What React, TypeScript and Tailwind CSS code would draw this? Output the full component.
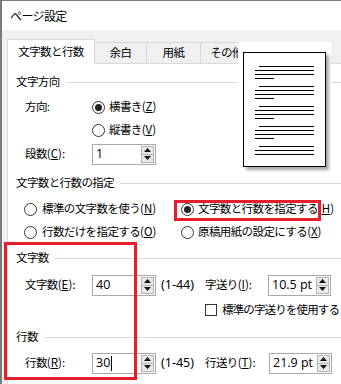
import React from "react";

const jp = "font-['Noto_Sans_CJK_JP',sans-serif]";

const Radio = ({ on }: { on?: boolean }) => (
  <span className="flex h-[13px] w-[13px] shrink-0 items-center justify-center rounded-full border border-[#333333] bg-white">
    {on && <span className="h-[7px] w-[7px] rounded-full bg-[#222222]" />}
  </span>
);

const Arrow = ({ up }: { up?: boolean }) => (
  <svg width="7" height="4" viewBox="0 0 7 4">
    {up ? <polygon points="0,4 7,4 3.5,0" fill="#111" /> : <polygon points="0,0 7,0 3.5,4" fill="#111" />}
  </svg>
);

// access key, e.g. (Z)
const Key = ({ k, colon }: { k: string; colon?: boolean }) => (
  <span className="tracking-normal">
    (<u>{k}</u>){colon && ":"}
  </span>
);

const Spin = ({ value, wide, caret }: { value: string; wide?: boolean; caret?: boolean }) => (
  <div className={`flex h-[21px] items-center border border-[#a8a8a8] bg-white ${wide ? "w-[63px]" : "w-[64px]"}`}>
    <span className="flex flex-1 items-center pl-[3px] font-['Open_Sans',sans-serif] text-[12.5px] leading-none tracking-normal text-black">
      {value}
      {caret && <span className="ml-px inline-block h-[15px] w-px bg-black" />}
    </span>
    <div className="mr-px flex h-[17px] w-[13px] flex-col border border-[#b4b4b4]">
      <div className="flex flex-1 items-center justify-center border-b border-[#b4b4b4] bg-[#e8e8e8]">
        <Arrow up />
      </div>
      <div className="flex flex-1 items-center justify-center bg-[#e8e8e8]">
        <Arrow />
      </div>
    </div>
  </div>
);

const Heading = ({ children, className }: { children: React.ReactNode; className: string }) => (
  <div className={`flex h-[16px] items-center pl-[8px] ${className}`}>
    <span className="leading-none">{children}</span>
    <span className="ml-[6px] h-px flex-1 bg-[#dcdcdc]" />
  </div>
);

const PageLines = ({ last }: { last?: boolean }) => (
  <div className="flex flex-col gap-[3px]">
    <div className="ml-[4px] h-px w-[55px] bg-black" />
    <div className="h-px w-[59px] bg-black" />
    <div className="h-px w-[59px] bg-black" />
    {!last && <div className="h-px w-[19px] bg-black" />}
  </div>
);

const Range = ({ children }: { children: React.ReactNode }) => (
  <span className="ml-[5px] w-[44px] font-['Noto_Sans',sans-serif] text-[12.5px] leading-none tracking-normal">{children}</span>
);

export default function App() {
  return (
    <div className={`relative h-[384px] w-[341px] overflow-hidden bg-[#f0f0f0] text-[11.5px] tracking-[-0.6px] text-black ${jp}`}>
      <div className="flex h-full flex-col border-l-2 border-t border-[#7a7a7a]">
        {/* Title bar */}
        <div className="flex h-[29px] items-center bg-white pl-[8px] text-[12px] leading-none">ページ設定</div>

        {/* Tabs */}
        <div className="relative z-10 mt-[9px] flex h-[25px] items-end pl-[5px]">
          <div className="flex h-[25px] w-[88px] items-center justify-center border-x border-t border-[#d9d9d9] bg-white leading-none">
            文字数と行数
          </div>
          <div className="mb-px flex h-[21px] w-[52px] items-center justify-center border-r border-t border-[#d9d9d9] leading-none">
            余白
          </div>
          <div className="mb-px flex h-[21px] w-[54px] items-center justify-center border-r border-t border-[#d9d9d9] leading-none">
            用紙
          </div>
          <div className="mb-px flex h-[21px] w-[52px] items-center justify-center border-r border-t border-[#d9d9d9] leading-none">
            その他
          </div>
        </div>

        {/* Panel */}
        <div className="-mt-px ml-[5px] flex flex-1 flex-col border-l border-t border-[#d9d9d9] bg-white">
          <Heading className="mt-[10px]">文字方向</Heading>

          <div className="mt-[6px] flex h-[22px] items-center pl-[17px]">
            <span className="w-[67px] leading-none">方向:</span>
            <Radio on />
            <span className="ml-[4px] leading-none">
              横書き<Key k="Z" />
            </span>
          </div>
          <div className="mt-px flex h-[22px] items-center pl-[84px]">
            <Radio />
            <span className="ml-[4px] leading-none">
              縦書き<Key k="V" />
            </span>
          </div>
          <div className="mt-[2px] flex h-[22px] items-center pl-[17px]">
            <span className="w-[67px] leading-none">
              段数<Key k="C" colon />
            </span>
            <Spin value="1" />
          </div>

          <Heading className="mt-[10px]">文字数と行数の指定</Heading>

          <div className="mt-[7px] flex h-[22px] items-center pl-[16px]">
            <div className="flex w-[157px] items-center">
              <Radio />
              <span className="ml-[5px] leading-none">
                標準の文字数を使う<Key k="N" />
              </span>
            </div>
            <Radio on />
            <span className="ml-[4px] whitespace-nowrap leading-none">
              文字数と行数を指定する<Key k="H" />
            </span>
          </div>
          <div className="mt-px flex h-[22px] items-center pl-[16px]">
            <div className="flex w-[157px] items-center">
              <Radio />
              <span className="ml-[5px] leading-none">
                行数だけを指定する<Key k="O" />
              </span>
            </div>
            <Radio />
            <span className="ml-[4px] whitespace-nowrap leading-none">
              原稿用紙の設定にする<Key k="X" />
            </span>
          </div>

          <Heading className="mt-[7px]">文字数</Heading>

          <div className="mt-[8px] flex h-[22px] items-center pl-[17px]">
            <span className="w-[67px] leading-none">
              文字数<Key k="E" colon />
            </span>
            <Spin value="40" />
            <Range>(1-44)</Range>
            <span className="w-[63px] leading-none">
              字送り<Key k="I" colon />
            </span>
            <Spin value="10.5 pt" wide />
          </div>
          <div className="mt-[3px] flex h-[22px] items-center pl-[197px]">
            <span className="h-[12px] w-[12px] shrink-0 border border-[#333333] bg-white" />
            <span className="ml-[5px] whitespace-nowrap leading-none tracking-[-0.85px]">標準の字送りを使用する</span>
          </div>

          <Heading className="mt-[8px]">行数</Heading>

          <div className="mt-[7px] flex h-[22px] items-center pl-[17px]">
            <span className="w-[67px] leading-none">
              行数<Key k="R" colon />
            </span>
            <Spin value="30" caret />
            <Range>(1-45)</Range>
            <span className="w-[64px] leading-none">
              行送り<Key k="T" colon />
            </span>
            <Spin value="21.9 pt" wide />
          </div>
        </div>
      </div>

      {/* Preview */}
      <div className="absolute left-[238px] top-[42px] z-20 h-[130px] w-[93px] bg-white">
        <div className="ml-[5px] mt-[10px] h-[115px] w-[83px] overflow-hidden border border-black bg-white pl-[11px] pt-[13px] shadow-[3px_3px_3px_rgba(0,0,0,0.35)]">
          <div className="flex flex-col gap-[7px]">
            <PageLines />
            <PageLines />
            <PageLines />
            <PageLines />
            <PageLines last />
          </div>
        </div>
      </div>

      {/* Highlights */}
      <div className="absolute left-[174px] top-[200px] z-20 h-[21px] w-[147px] border-[3px] border-[#e61e2b]" />
      <div className="absolute left-[4px] top-[242px] z-20 h-[138px] w-[133px] border-[3px] border-[#e61e2b]" />
    </div>
  );
}
